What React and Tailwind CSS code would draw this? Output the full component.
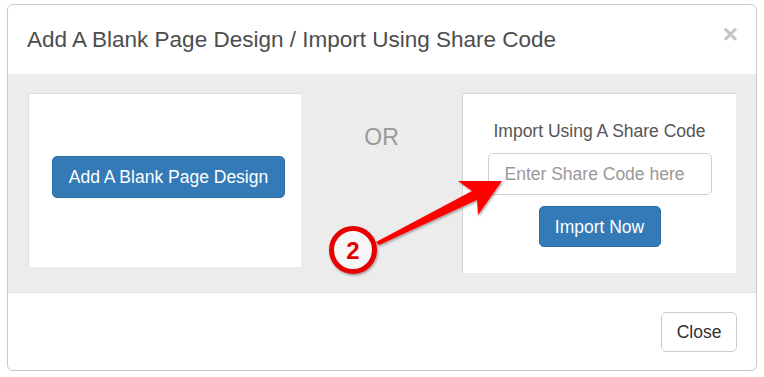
export default function App() {
  const font = { fontFamily: '"Liberation Sans", Arial, sans-serif' };
  return (
    <div className="relative w-[764px] h-[377px] bg-white overflow-hidden" style={font}>
      <div className="pt-[4px] pl-[7px]">
        <div className="w-[750px] h-[367px] border border-[#c9c9c9] rounded-[6px] bg-white flex flex-col overflow-hidden">
          {/* header */}
          <div className="h-[69px] flex items-center justify-between pl-[19px] pr-[18px] shrink-0">
            <div className="text-[22.5px] text-[#4d4d4d] leading-none pt-[1px]">
              Add A Blank Page Design / Import Using Share Code
            </div>
            <div className="text-[26px] font-bold text-[#c4c4c4] leading-none self-start mt-[16px]">×</div>
          </div>
          {/* body */}
          <div className="h-[219px] bg-[#ececec] border-b border-[#e2e2e2] flex px-[20px] pt-[19px] shrink-0">
            <div className="w-[273px] h-[174px] bg-white border-l border-t border-[#dcdcdc] flex items-start">
              <button className="ml-[23px] mt-[62px] w-[233px] h-[42px] pt-[2px] bg-[#337ab7] border border-[#2e6da4] rounded-[5px] text-white text-[17.5px] leading-none">
                Add A Blank Page Design
              </button>
            </div>
            <div className="flex-1 flex justify-center">
              <div className="mt-[33px] text-[23px] text-[#999] leading-none">OR</div>
            </div>
            <div className="w-[274px] h-[180px] bg-white border-l border-t border-[#d4d4d4] flex flex-col items-center">
              <div className="mt-[29px] text-[17.5px] text-[#555] leading-none">Import Using A Share Code</div>
              <div className="mt-[12px] w-[224px] h-[42px] pt-[3px] border border-[#cfcfcf] rounded-[5px] flex items-center pl-[16px] text-[17.5px] text-[#999] leading-none">
                Enter Share Code here
              </div>
              <button className="mt-[11px] w-[122px] h-[41px] pt-[3px] bg-[#337ab7] border border-[#2e6da4] rounded-[5px] text-white text-[17.5px] leading-none">
                Import Now
              </button>
            </div>
          </div>
          {/* footer */}
          <div className="flex-1 flex justify-end items-start pr-[19px] pt-[19px]">
            <button className="w-[76px] h-[40px] pt-[1px] border border-[#cccccc] rounded-[5px] bg-white text-[#333] text-[17.5px] leading-none">
              Close
            </button>
          </div>
        </div>
      </div>
      <svg className="absolute top-0 left-0 pointer-events-none" width="764" height="377" viewBox="0 0 764 377">
        <defs>
          <filter id="sh" x="-20%" y="-20%" width="140%" height="140%">
            <feDropShadow dx="1" dy="1.5" stdDeviation="1.2" floodColor="#000" floodOpacity="0.35" />
          </filter>
        </defs>
        <g filter="url(#sh)">
          <polygon points="376,242 379,245 477,200 478,215 502,181 458,181 472,191" fill="#ff0000" />
          <circle cx="353" cy="250" r="21.5" fill="#f6f6f6" stroke="#e80000" strokeWidth="5" />
        </g>
        <text x="353" y="258.5" textAnchor="middle" fontFamily='"Liberation Sans", Arial, sans-serif' fontWeight="700" fontSize="24" fill="#e30000">2</text>
      </svg>
    </div>
  );
}
